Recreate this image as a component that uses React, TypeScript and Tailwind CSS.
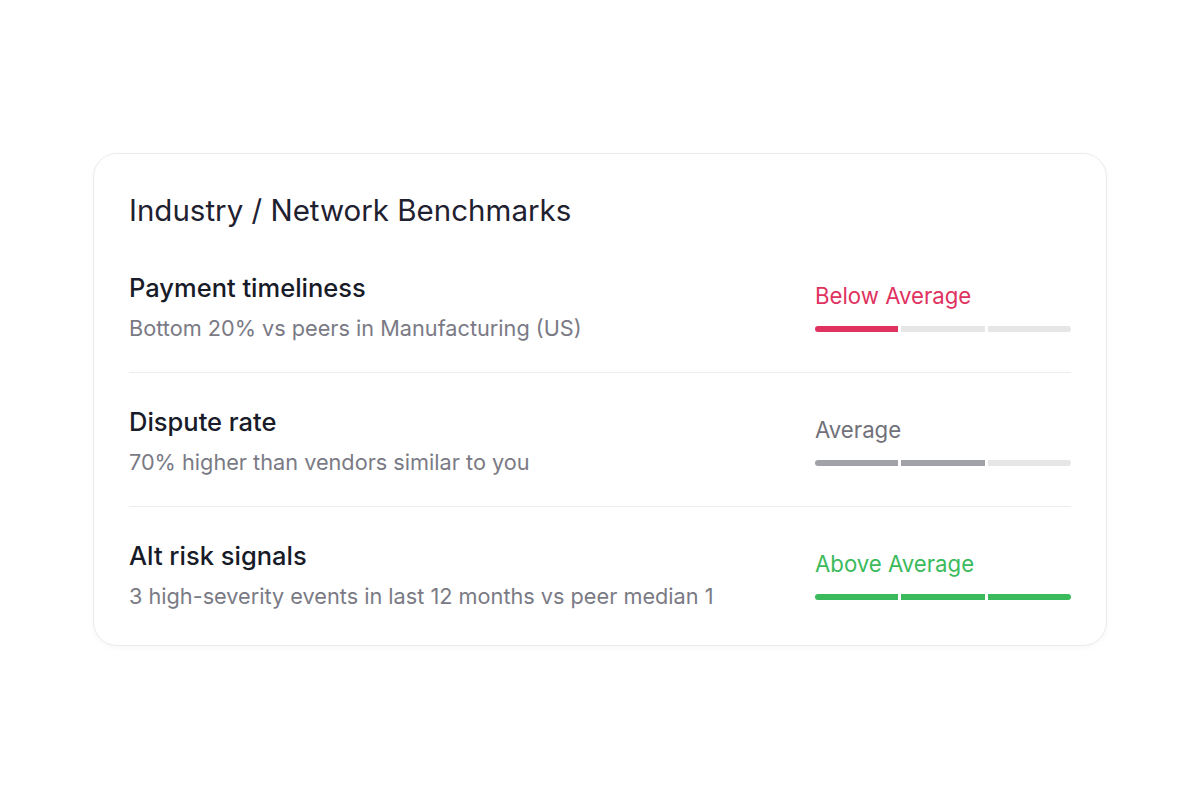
import React from "react";

type Row = {
  title: string;
  sub: string;
  label: string;
  labelColor: string;
  segs: string[];
};

const rows: Row[] = [
  {
    title: "Payment timeliness",
    sub: "Bottom 20% vs peers in Manufacturing (US)",
    label: "Below Average",
    labelColor: "text-[#e0325f]",
    segs: ["bg-[#e0325f]", "bg-[#e6e6e6]", "bg-[#e6e6e6]"],
  },
  {
    title: "Dispute rate",
    sub: "70% higher than vendors similar to you",
    label: "Average",
    labelColor: "text-[#71717a]",
    segs: ["bg-[#a1a1a8]", "bg-[#a1a1a8]", "bg-[#e6e6e6]"],
  },
  {
    title: "Alt risk signals",
    sub: "3 high-severity events in last 12 months vs peer median 1",
    label: "Above Average",
    labelColor: "text-[#3bba5c]",
    segs: ["bg-[#3bba5c]", "bg-[#3bba5c]", "bg-[#3bba5c]"],
  },
];

export default function App() {
  return (
    <div
      className="w-[1200px] h-[800px] bg-white flex items-start justify-center pt-[153px]"
      style={{ fontFamily: "Inter, 'Noto Sans', sans-serif" }}
    >
      <div className="w-[1014px] rounded-[24px] border border-[#ebebeb] bg-white shadow-[0_2px_6px_rgba(0,0,0,0.03)] px-[35px] pt-[40px] pb-[35px]">
        <h2 className="text-[29.5px] leading-[32px] text-[#1f2130] font-normal mb-[13px]">
          Industry / Network Benchmarks
        </h2>
        {rows.map((r, i) => (
          <div
            key={r.title}
            className={
              "flex items-center justify-between pt-[34px] " +
              (i < rows.length - 1 ? "pb-[30px] border-b border-[#ececec]" : "")
            }
          >
            <div className="flex flex-col gap-[11px]">
              <div className="text-[25.5px] leading-[30px] font-medium text-[#181b28]">
                {r.title}
              </div>
              <div className="text-[21.7px] leading-[28px] text-[#7a7a85]">
                {r.sub}
              </div>
            </div>
            <div className="w-[256px] flex flex-col gap-[18px]">
              <div className={"text-[22.2px] leading-[24px] " + r.labelColor}>
                {r.label}
              </div>
              <div className="flex gap-[3px] h-[6px] rounded-full overflow-hidden">
                {r.segs.map((s, j) => (
                  <div key={j} className={"flex-1 " + s} />
                ))}
              </div>
            </div>
          </div>
        ))}
      </div>
    </div>
  );
}
